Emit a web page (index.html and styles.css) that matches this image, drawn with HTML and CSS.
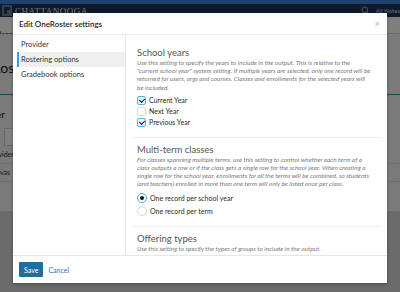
FILE: index.html
```html
<!DOCTYPE html>
<html>
<head>
    <title>Edit OneRoster settings</title>
    <link rel="stylesheet" href="styles.css">
</head>
<body>
    <div class="page">
        <div class="topbar"></div>
        <div class="header">
            <div class="brand">
                <svg width="10" height="11" viewBox="0 0 10 11"><rect x="0" y="0" width="10" height="11" fill="#6f8194"/><path d="M2 2h6v3H5v4H2z" fill="#1a3458"/></svg>
                <span>CHATTANOOGA</span>
            </div>
            <div class="header-right">
                <svg width="9" height="9" viewBox="0 0 9 9"><circle cx="3.8" cy="3.8" r="2.8" fill="none" stroke="#9fb0c4" stroke-width="1"/><path d="M6 6l2.5 2.5" stroke="#9fb0c4" stroke-width="1"/></svg>
                <span class="notes">All Notes</span>
            </div>
        </div>
        <div class="tabs"><div class="clip"><span class="tab">People</span></div></div>
        <div class="page-body">
            <div class="clip big-title"><span>Roster</span></div>
            <div class="rule"></div>
            <div class="clip sub-title"><span>Provider</span></div>
            <div class="search-box"><div class="clip"><span>Find</span></div></div>
            <div class="row"><div class="clip"><span class="shift">Provider</span></div></div>
            <div class="row"><div class="clip"><span class="shift">Canvas</span></div></div>
        </div>
    </div>

    <div class="overlay"></div>

    <div class="modal">
        <div class="modal-header">
            <span class="modal-title">Edit OneRoster settings</span>
            <span class="close">&times;</span>
        </div>

        <div class="modal-body">
            <div class="nav">
                <div class="nav-item">Provider</div>
                <div class="nav-item active">Rostering options</div>
                <div class="nav-item">Gradebook options</div>
            </div>

            <div class="content">
                <div class="section">
                    <h3>School years</h3>
                    <p class="help">Use this setting to specify the years to include in the output. This is relative to the "current school year" system setting. If multiple years are selected, only one record will be returned for users, orgs and courses. Classes and enrollments for the selected years will be included.</p>
                    <div class="options">
                        <label class="option"><span class="box checked"></span>Current Year</label>
                        <label class="option"><span class="box"></span>Next Year</label>
                        <label class="option"><span class="box checked"></span>Previous Year</label>
                    </div>
                </div>

                <div class="section">
                    <h3>Multi-term classes</h3>
                    <p class="help">For classes spanning multiple terms, use this setting to control whether each term of a class outputs a row or if the class gets a single row for the school year. When creating a single row for the school year, enrollments for all the terms will be combined, so students (and teachers) enrolled in more than one term will only be listed once per class.</p>
                    <div class="options radios">
                        <label class="option"><span class="radio selected"></span>One record per school year</label>
                        <label class="option"><span class="radio"></span>One record per term</label>
                    </div>
                </div>

                <div class="section">
                    <h3>Offering types</h3>
                    <p class="help">Use this setting to specify the types of groups to include in the output.</p>
                </div>
            </div>
        </div>

        <div class="modal-footer">
            <button class="btn-save">Save</button>
            <a class="btn-cancel">Cancel</a>
        </div>
    </div>
</body>
</html>
```

FILE: styles.css
```css
body {
    margin: 0;
    width: 400px;
    height: 292px;
    overflow: hidden;
    position: relative;
    font-family: Lato, "Open Sans", sans-serif;
    background-color: #d6d6d6;
}

.page {
    display: flex;
    flex-direction: column;
}

.topbar {
    height: 4px;
    background-color: #3a86dc;
}

.header {
    height: 13px;
    background-color: #1a3458;
    display: flex;
    align-items: center;
    justify-content: space-between;
    padding: 0 0 0 2px;
}

.brand {
    display: flex;
    align-items: center;
    gap: 3px;
    color: #e6ecf3;
    font-family: "Liberation Serif", serif;
    font-size: 9px;
    letter-spacing: 0.5px;
}

.header-right {
    display: flex;
    align-items: center;
    gap: 6px;
    color: #c8d3e0;
    font-size: 6px;
}

/* page behind the dialog: only its left strip shows */
.clip {
    width: 13px;
    overflow: hidden;
    white-space: nowrap;
}

.tabs {
    height: 12px;
    padding-top: 4px;
    border-bottom: 1px solid #ddd;
    background-color: #fff;
}

.tab {
    font-size: 7px;
    color: #333;
    margin-left: -3px;
}

.page-body {
    background-color: #f4f4f4;
    height: 177px;
    color: #222;
    overflow: hidden;
}

.big-title {
    font-size: 14px;
    line-height: 16px;
    margin-top: 26px;
}

.big-title span {
    margin-left: -8px;
}

.rule {
    height: 1px;
    background-color: #2b8fa8;
    margin-top: 18px;
}

.sub-title {
    font-size: 10px;
    line-height: 12px;
    margin-top: 13px;
}

.sub-title span {
    margin-left: -32px;
}

.search-box {
    width: 40px;
    height: 18px;
    margin: 8px 0 0 4px;
    border: 1px solid #ccc;
    background-color: #fff;
    font-size: 6px;
    color: #888;
    font-style: italic;
    line-height: 16px;
    box-sizing: border-box;
}

.search-box span {
    margin-left: 12px;
}

.search-box .clip {
    width: 9px;
}

.row {
    font-size: 7px;
    color: #333;
    height: 17px;
    line-height: 17px;
    border-bottom: 1px solid #ddd;
}

.row .shift {
    margin-left: -12px;
}

.overlay {
    position: absolute;
    inset: 0;
    background-color: rgba(0, 0, 0, 0.5);
}

.modal {
    position: absolute;
    left: 13px;
    top: 13px;
    width: 374px;
    height: 270px;
    background-color: #fff;
    display: flex;
    flex-direction: column;
    box-shadow: 0 1px 3px rgba(0, 0, 0, 0.3);
}

.modal-header {
    height: 21px;
    flex: 0 0 21px;
    border-bottom: 1px solid #ececec;
    display: flex;
    align-items: center;
    justify-content: space-between;
    padding: 0 7px 0 6px;
}

.modal-title {
    font-size: 8px;
    color: #1d1d1d;
    font-weight: 600;
}

.close {
    font-size: 9px;
    color: #b5b5b5;
}

.modal-body {
    flex: 1;
    display: flex;
    border-bottom: 1px solid #e6e6e6;
    overflow: hidden;
}

.nav {
    width: 113px;
    flex: 0 0 113px;
    box-sizing: border-box;
    border-right: 1px solid #e6e6e6;
    padding: 2px 0 0 4px;
}

.nav-item {
    height: 15px;
    line-height: 15px;
    font-size: 7.5px;
    color: #333;
    border-left: 2px solid transparent;
    padding-left: 2px;
}

.nav-item.active {
    background-color: #efefef;
    border-left-color: #2fa3e0;
}

.content {
    flex: 1;
    padding: 6px 6px 0;
    overflow: hidden;
}

.section {
    padding: 5px 5px 8px;
    border-bottom: 1px solid #eeeeee;
}

.section:first-child {
    padding-bottom: 9px;
}

.section h3 {
    margin: 0;
    font-size: 9.5px;
    line-height: 13px;
    font-weight: normal;
    color: #555;
}

.help {
    margin: 0;
    font-size: 6.4px;
    line-height: 8.2px;
    font-style: italic;
    color: #7a7a7a;
    width: 235px;
}

.options {
    margin-top: 3px;
    display: flex;
    flex-direction: column;
}

.option {
    display: flex;
    align-items: center;
    gap: 3px;
    height: 11px;
    font-size: 7px;
    color: #2a2a2a;
}

.radios .option {
    height: 13px;
}

.box {
    width: 9px;
    height: 9px;
    box-sizing: border-box;
    border: 1px solid #dcdcdc;
    border-radius: 2px;
    background-color: #fff;
    display: flex;
    align-items: center;
    justify-content: center;
}

.box.checked {
    border: 1.5px solid #4fb6ee;
    background-color: #eef8fe;
}

.box.checked::after {
    content: "";
    width: 2.5px;
    height: 4px;
    border-right: 1.4px solid #111;
    border-bottom: 1.4px solid #111;
    transform: translateY(-0.8px) rotate(45deg);
}

.radio {
    width: 10px;
    height: 10px;
    box-sizing: border-box;
    border: 1px solid #d6d6d6;
    border-radius: 50%;
    background-color: #fff;
    display: flex;
    align-items: center;
    justify-content: center;
}

.radio.selected {
    border: 1.5px solid #44aee8;
}

.radio.selected::after {
    content: "";
    width: 4px;
    height: 4px;
    border-radius: 50%;
    background-color: #111;
}

.modal-footer {
    flex: 0 0 27px;
    display: flex;
    align-items: center;
    gap: 5px;
    padding: 0 6px;
}

.btn-save {
    height: 15px;
    padding: 0 5px;
    border: none;
    border-radius: 1px;
    background-color: #1d6fa1;
    color: #fff;
    font-family: Lato, sans-serif;
    font-size: 7px;
}

.btn-cancel {
    font-size: 7px;
    color: #2c7bb8;
}
```
